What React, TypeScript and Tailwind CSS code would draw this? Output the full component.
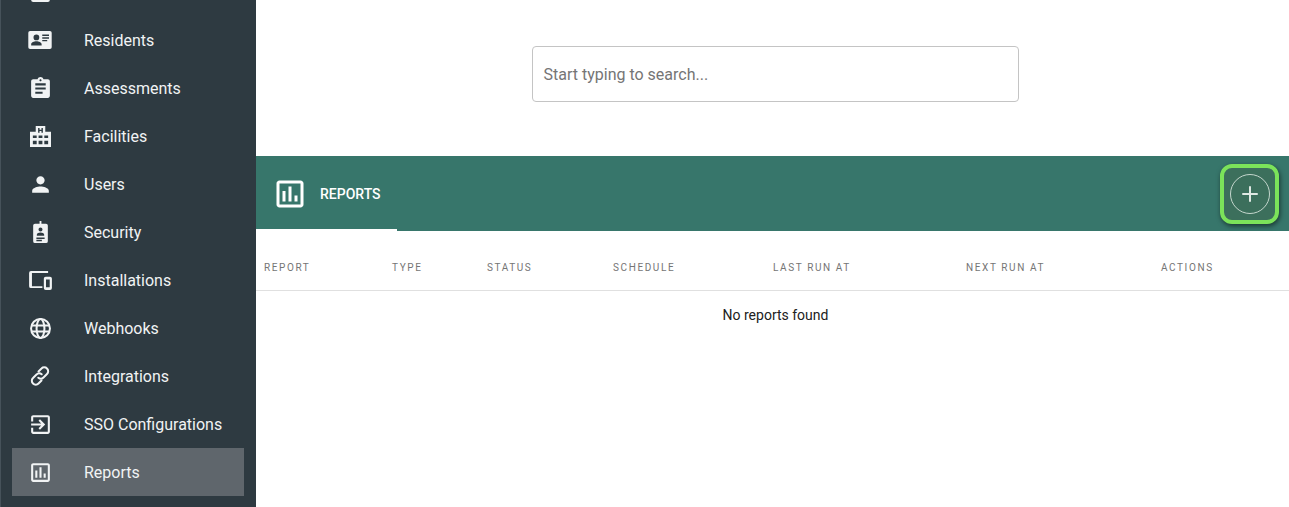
import { Plus } from 'lucide-react';
import type { ReactNode } from 'react';

const Icon = ({ children, className = 'w-[25px] h-[25px]' }: { children: ReactNode; className?: string }) => (
  <svg viewBox="0 0 24 24" fill="currentColor" className={className}>{children}</svg>
);

const ReportsGlyph = () => (
  <path d="M19 3H5c-1.100 0-2 .900-2 2v14c0 1.100.900 2 2 2h14c1.100 0 2-.900 2-2V5c0-1.100-.900-2-2-2zm0 16H5V5h14v14zM7 10h2v7H7zM11 7h2v10h-2zM15 13h2v4h-2z" />
);

const navItems: { label: string; active?: boolean; icon: ReactNode }[] = [
  // only the bottom of this row's icon is on screen, its label is scrolled away
  { label: '', icon: <Icon><path d="M5 3h14a2 2 0 0 1 2 2v14a2 2 0 0 1-2 2H5a2 2 0 0 1-2-2V5a2 2 0 0 1 2-2z" /></Icon> },
  {
    label: 'Residents',
    icon: (
      <svg viewBox="0 0 26 20" fill="currentColor" className="h-[18px] w-[24px]">
        <path fillRule="evenodd" d="M2 0h22a2 2 0 0 1 2 2v16a2 2 0 0 1-2 2H2a2 2 0 0 1-2-2V2a2 2 0 0 1 2-2zm7 4a3.200 3.200 0 1 0 0 6.400A3.200 3.200 0 0 0 9 4zm0 7.500c-2.600 0-5.800 1.200-5.800 3.300V16h11.600v-1.200c0-2.100-3.200-3.300-5.800-3.300zM15.500 4v1.500H23V4zm0 3v1.500H23V7zm0 3v1.500H21V10z" />
      </svg>
    ),
  },
  {
    label: 'Assessments',
    icon: <Icon><path d="M19 3h-4.180C14.400 1.840 13.300 1 12 1c-1.300 0-2.400.840-2.820 2H5c-1.100 0-2 .900-2 2v14c0 1.100.900 2 2 2h14c1.100 0 2-.900 2-2V5c0-1.100-.900-2-2-2zm-7 0c.550 0 1 .450 1 1s-.450 1-1 1-1-.450-1-1 .450-1 1-1zm2 14H7v-2h7v2zm3-4H7v-2h10v2zm0-4H7V7h10v2z" /></Icon>,
  },
  {
    label: 'Facilities',
    icon: (
      <svg viewBox="0 0 22 22" fill="currentColor" className="h-[21px] w-[21px]">
        <path fillRule="evenodd" d="M6 0h10v6h6v16H0V6h6zm2.500 2v5H10V5.300h2V7h1.500V2H12v1.800h-2V2zM3 10v2.500h4V10zm6 0v2.500h4V10zm6 0v2.500h4V10zM3 15.500V19h4v-3.500zm6 0V19h4v-3.500zm6 0V19h4v-3.500z" />
      </svg>
    ),
  },
  {
    label: 'Users',
    icon: <Icon><path d="M12 12c2.210 0 4-1.790 4-4s-1.790-4-4-4-4 1.790-4 4 1.790 4 4 4zm0 2c-2.670 0-8 1.340-8 4v2h16v-2c0-2.660-5.330-4-8-4z" /></Icon>,
  },
  {
    label: 'Security',
    icon: (
      <svg viewBox="0 0 16 24" fill="currentColor" className="h-[22px] w-[15px]">
        <path fillRule="evenodd" d="M7 0h2v3h5a2 2 0 0 1 2 2v17a2 2 0 0 1-2 2H2a2 2 0 0 1-2-2V5a2 2 0 0 1 2-2h5zM8 7a2.200 2.200 0 1 0 0 4.400A2.200 2.200 0 0 0 8 7zm0 5.500c-1.900 0-4 1-4 2.300V16h8v-1.200c0-1.300-2.100-2.300-4-2.300zM3.500 18v1.500h9V18zm0 2.500V22h6v-1.500z" />
      </svg>
    ),
  },
  {
    label: 'Installations',
    icon: (
      <svg viewBox="0 0 24 20" fill="currentColor" className="h-[19px] w-[23px]">
        <path fillRule="evenodd" d="M2 0h18v2H3v14h11v2H2a2 2 0 0 1-2-2V2a2 2 0 0 1 2-2zm15.500 6H22a2 2 0 0 1 2 2v10a2 2 0 0 1-2 2h-4.500a2 2 0 0 1-2-2V8a2 2 0 0 1 2-2zm.300 3v8h3.900V9z" />
      </svg>
    ),
  },
  {
    label: 'Webhooks',
    icon: (
      <svg viewBox="0 0 24 24" fill="none" stroke="currentColor" strokeWidth="2.300" className="h-[21px] w-[21px]">
        <circle cx="12" cy="12" r="10.800" />
        <ellipse cx="12" cy="12" rx="4.500" ry="10.800" />
        <path d="M2 8.500h20M2 15.500h20" />
      </svg>
    ),
  },
  {
    label: 'Integrations',
    icon: (
      <svg viewBox="0 0 20 20" fill="none" stroke="currentColor" strokeWidth="2" strokeLinecap="round" className="h-[20px] w-[20px]">
        <path d="M8.500 5.500l3-3a3.800 3.800 0 0 1 5.500 0 3.800 3.800 0 0 1 0 5.500l-3.500 3.500a3.800 3.800 0 0 1-5.200.200" />
        <path d="M11.500 14.500l-3 3a3.800 3.800 0 0 1-5.500 0 3.800 3.800 0 0 1 0-5.500l3.500-3.500a3.800 3.800 0 0 1 5.200-.200" />
      </svg>
    ),
  },
  {
    label: 'SSO Configurations',
    icon: <Icon><path d="M10.090 15.590L11.500 17l5-5-5-5-1.410 1.410L12.670 11H3v2h9.670l-2.580 2.590zM19 3H5c-1.110 0-2 .900-2 2v4h2V5h14v14H5v-4H3v4c0 1.100.890 2 2 2h14c1.100 0 2-.900 2-2V5c0-1.100-.900-2-2-2z" /></Icon>,
  },
  { label: 'Reports', active: true, icon: <Icon><ReportsGlyph /></Icon> },
];

const columns = ['REPORT', 'TYPE', 'STATUS', 'SCHEDULE', 'LAST RUN AT', 'NEXT RUN AT', 'ACTIONS'];

export default function App() {
  return (
    <div className="flex h-[507px] w-[1289px] overflow-hidden bg-white font-['Roboto',sans-serif]">
      <aside className="w-[256px] shrink-0 overflow-hidden border-l border-[#46525a] bg-[#2e3a41] pl-[11px] pr-3 text-[#f1f3f4]">
        <div className="mt-[-32px]">
          {navItems.map((item, i) => (
            <div key={i} className={`flex h-12 items-center ${item.active ? 'bg-[#5f666c]' : ''}`}>
              <div className="flex w-14 justify-center">{item.icon}</div>
              {item.label && <span className="ml-4 pt-[2px] text-[16px]">{item.label}</span>}
            </div>
          ))}
        </div>
      </aside>

      <main className="flex min-w-0 flex-1 flex-col">
        <div className="flex h-[156px] items-start justify-center pl-[5px] pt-[46px]">
          <div className="flex h-14 w-[487px] items-center rounded-[4px] border-[1.5px] border-[#c4c4c4] px-[11px] pt-[2px] text-[16px] text-[#757575]">
            Start typing to search...
          </div>
        </div>

        <div className="flex h-[75px] items-stretch justify-between bg-[#37766b] text-white">
          <div className="flex w-[141px] items-center border-b-2 border-white pl-4 pt-[2px]">
            <Icon className="h-9 w-9"><ReportsGlyph /></Icon>
            <span className="ml-[12px] pt-[2px] text-[14px] font-medium">REPORTS</span>
          </div>
          <div className="flex items-center pr-[10px]">
            <div className="flex h-[60px] w-[59px] items-center justify-center rounded-[12px] border-[4px] border-[#7be35a] bg-[#3c6f5c] shadow-[1px_2px_5px_rgba(0,0,0,0.55)]">
              <div className="flex h-10 w-10 items-center justify-center rounded-full border border-[#c5d6cd] text-[#dfe8e3]">
                <Plus className="h-6 w-6" strokeWidth={2} />
              </div>
            </div>
          </div>
        </div>

        <div className="grid h-[60px] grid-cols-[128px_95px_126px_160px_193px_195px_1fr] items-center border-b border-[#e0e0e0] pl-2 pt-[14px] text-[10px] tracking-[1.6px] text-[#757575]">
          {columns.map((column) => (
            <div key={column}>{column}</div>
          ))}
        </div>

        <div className="pl-[6px] pt-[15px] text-center text-[14px] leading-[18px] text-[#212121]">No reports found</div>
      </main>
    </div>
  );
}
